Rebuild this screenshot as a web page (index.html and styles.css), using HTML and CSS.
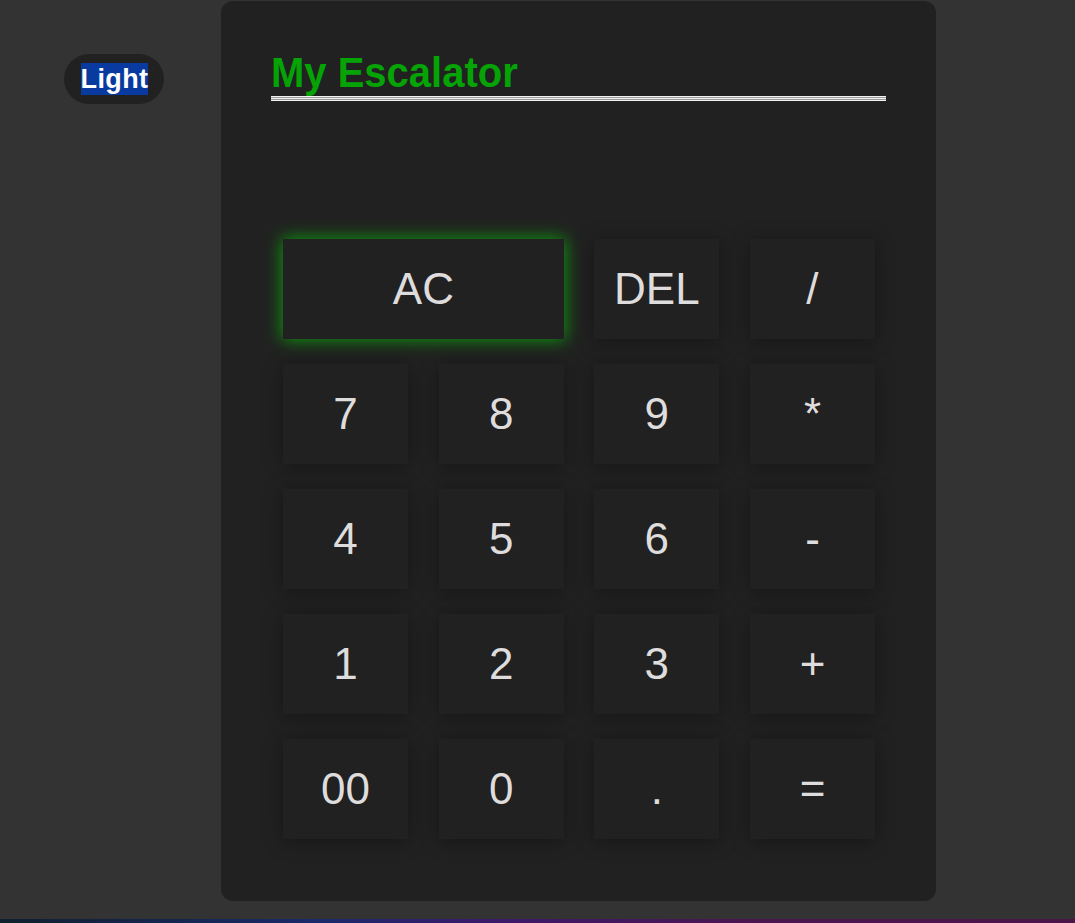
FILE: index.html
```html
<!DOCTYPE html>
<html>
<head>
<meta charset="utf-8">
<link rel="stylesheet" href="styles.css">
</head>
<body>
<div class="page">
  <div class="side">
    <button class="theme"><span class="sel">Light</span></button>
  </div>
  <div class="calc">
    <h1 class="title">My Escalator</h1>
    <div class="rule"></div>
    <div class="display"></div>
    <div class="keys">
      <button class="key wide glow">AC</button>
      <button class="key">DEL</button>
      <button class="key">/</button>
      <button class="key">7</button>
      <button class="key">8</button>
      <button class="key">9</button>
      <button class="key">*</button>
      <button class="key">4</button>
      <button class="key">5</button>
      <button class="key">6</button>
      <button class="key">-</button>
      <button class="key">1</button>
      <button class="key">2</button>
      <button class="key">3</button>
      <button class="key">+</button>
      <button class="key">00</button>
      <button class="key">0</button>
      <button class="key">.</button>
      <button class="key">=</button>
    </div>
  </div>
</div>
<div class="bar"></div>
</body>
</html>
```
FILE: styles.css
```css
html, body {
  margin: 0;
  padding: 0;
}
body {
  background: #333333;
  font-family: "Liberation Sans", Arial, sans-serif;
  height: 923px;
  display: flex;
  flex-direction: column;
  overflow: hidden;
}
.page {
  flex: 1;
  display: flex;
  align-items: flex-start;
  padding-top: 1px;
}
.side {
  width: 221px;
  padding: 53px 0 0 64px;
  box-sizing: border-box;
}
.theme {
  width: 100px;
  height: 50px;
  border: none;
  border-radius: 25px;
  background: #212121;
  padding: 0;
  display: flex;
  align-items: center;
  justify-content: center;
  cursor: pointer;
}
.sel {
  background: #083aa0;
  color: #ffffff;
  font-family: "Liberation Sans", Arial, sans-serif;
  font-weight: bold;
  font-size: 27px;
  line-height: 32px;
  display: inline-block;
  margin-left: 1px;
  letter-spacing: 0.4px;
}
.calc {
  width: 715px;
  height: 900px;
  box-sizing: border-box;
  background: #212121;
  border-radius: 12px;
  padding: 50px 50px 0 50px;
}
.title {
  margin: 0;
  color: #05a305;
  font-size: 40px;
  line-height: 46px;
  font-weight: bold;
  height: 45px;
  transform: scaleY(1.08);
  transform-origin: bottom left;
}
.rule {
  height: 5px;
  background: repeating-linear-gradient(to bottom, #f2f2f2 0, #f2f2f2 1px, #9a9a9a 1px, #9a9a9a 2px);
}
.display {
  height: 138px;
}
.keys {
  display: grid;
  grid-template-columns: repeat(4, 125px);
  grid-auto-rows: 100px;
  column-gap: 30.67px;
  row-gap: 25px;
  justify-content: center;
  padding-left: 1px;
}
.key {
  background: #212121;
  border: none;
  color: #dedcdc;
  font-family: "Liberation Sans", Arial, sans-serif;
  font-size: 44px;
  padding: 0;
  box-shadow: 0 2px 18px rgba(0, 0, 0, 0.35);
  cursor: pointer;
}
.wide {
  grid-column: span 2;
}
.glow {
  box-shadow: 0 0 16px 1px #0d9a0d;
}
.bar {
  height: 4px;
  background: linear-gradient(90deg, #10202e 0%, #1b2a6b 30%, #3a1a6a 45%, #4a1650 70%, #4a1648 100%);
}
```
